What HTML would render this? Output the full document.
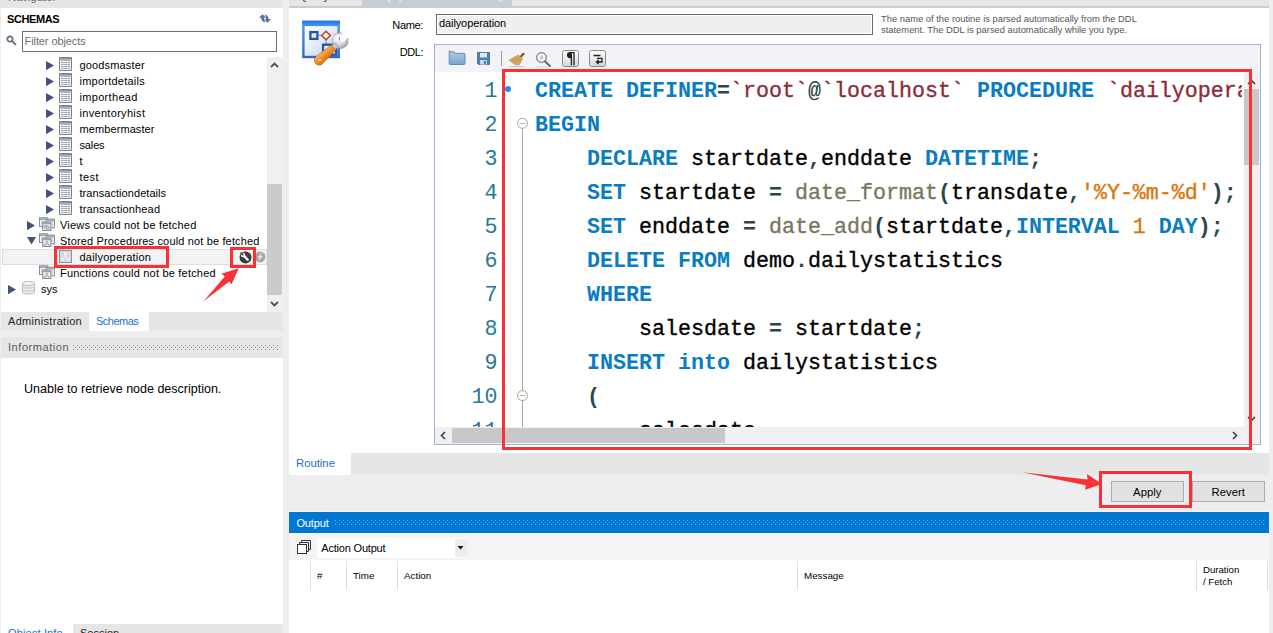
<!DOCTYPE html>
<html>
<head>
<meta charset="utf-8">
<title>MySQL Workbench</title>
<style>
html,body{margin:0;padding:0;}
body{width:1273px;height:633px;overflow:hidden;position:relative;background:#eeeef0;font-family:"Liberation Sans",sans-serif;font-size:11.3px;color:#000;}
.a{position:absolute;}
.t{position:absolute;white-space:nowrap;line-height:16px;height:16px;}
svg{position:absolute;overflow:visible;}
.row{position:absolute;left:0;height:16px;width:266px;}
.lbl{position:absolute;top:0;line-height:16px;white-space:nowrap;font-size:11px;color:#000;}
.ln{position:absolute;left:0;width:62.5px;text-align:right;font-family:"Liberation Mono",monospace;font-size:21.66px;color:#2a7894;line-height:34px;height:34px;}
.cl{position:absolute;left:100px;font-family:"Liberation Mono",monospace;font-size:21.66px;line-height:34px;height:34px;white-space:pre;color:#000;-webkit-text-stroke:0.35px currentColor;}
.k{color:#0a7cc2;font-weight:bold;-webkit-text-stroke:0;}
.s{color:#8b2d3a;}
.p{color:#2c474b;font-weight:bold;-webkit-text-stroke:0;}
.f{color:#7b7660;}
.o{color:#d9760a;}
</style>
</head>
<body>
<!-- ================= LEFT PANEL ================= -->
<div class="a" style="left:1px;top:0;width:282px;height:633px;background:#fff"></div>
<div class="a" style="left:0;top:0;width:283px;height:8px;background:#e6e6e6"></div>
<div class="a" style="left:0;top:0;width:283px;height:8px;overflow:hidden"><div class="t" style="left:8px;top:-11px;font-size:11.3px;color:#6a6a6a">Navigator</div></div>
<div class="t" style="left:7px;top:11px;font-weight:bold;font-size:11px;letter-spacing:-0.4px">SCHEMAS</div>
<svg class="a" style="left:259px;top:13.5px" width="12" height="9" viewBox="0 0 12 9"><path d="M3.5 0.2 L7 3.8 H5 C5 5.8 5.6 7.4 6.6 8.6 C4.2 8.4 2.3 6.6 2.2 3.8 H0 Z" fill="#56729a"/><path d="M8.5 8.8 L5 5.2 H7 C7 3.2 6.4 1.6 5.4 0.4 C7.8 0.6 9.7 2.4 9.8 5.2 H12 Z" fill="#56729a"/></svg>
<svg class="a" style="left:5.65px;top:35.1px" width="11" height="11" viewBox="0 0 11 11"><circle cx="4" cy="4" r="2.7" fill="none" stroke="#5f6d7e" stroke-width="1.7"/><path d="M6.2 6.2 L9.4 9.4" stroke="#5f6d7e" stroke-width="1.9" stroke-linecap="round"/></svg>
<div class="a" style="left:22px;top:31px;width:253px;height:19px;border:1px solid #6e6e6e;background:#fff"></div>
<div class="t" style="left:24.6px;top:33px;color:#6d6d6d;font-size:11px;letter-spacing:-0.1px">Filter objects</div>
<svg class="a" style="left:46px;top:60.9px" width="8" height="9"><path d="M0 0 L8 4.6 L0 9.2 Z" fill="#42537a"/></svg>
<svg class="a" style="left:59px;top:57px" width="13" height="14" viewBox="0 0 13 14"><rect x="0.5" y="0.5" width="12" height="13" fill="#eff1f4" stroke="#7d858f"/><rect x="1" y="1" width="11" height="1.6" fill="#8a919b"/><path d="M2.2 3.5 H4.6 M5.3 3.5 H8.2 M8.9 3.5 H10.9" stroke="#8e959f" stroke-width="0.9"/><path d="M2.2 5.5 H4.6 M5.3 5.5 H8.2 M8.9 5.5 H10.9" stroke="#8e959f" stroke-width="0.9"/><path d="M2.2 7.5 H4.6 M5.3 7.5 H8.2 M8.9 7.5 H10.9" stroke="#8e959f" stroke-width="0.9"/><path d="M2.2 9.5 H4.6 M5.3 9.5 H8.2 M8.9 9.5 H10.9" stroke="#8e959f" stroke-width="0.9"/><path d="M2.2 11.5 H4.6 M5.3 11.5 H8.2 M8.9 11.5 H10.9" stroke="#8e959f" stroke-width="0.9"/></svg>
<div class="lbl" style="left:79.5px;top:57px;letter-spacing:0.15px">goodsmaster</div>
<svg class="a" style="left:46px;top:76.9px" width="8" height="9"><path d="M0 0 L8 4.6 L0 9.2 Z" fill="#42537a"/></svg>
<svg class="a" style="left:59px;top:73px" width="13" height="14" viewBox="0 0 13 14"><rect x="0.5" y="0.5" width="12" height="13" fill="#eff1f4" stroke="#7d858f"/><rect x="1" y="1" width="11" height="1.6" fill="#8a919b"/><path d="M2.2 3.5 H4.6 M5.3 3.5 H8.2 M8.9 3.5 H10.9" stroke="#8e959f" stroke-width="0.9"/><path d="M2.2 5.5 H4.6 M5.3 5.5 H8.2 M8.9 5.5 H10.9" stroke="#8e959f" stroke-width="0.9"/><path d="M2.2 7.5 H4.6 M5.3 7.5 H8.2 M8.9 7.5 H10.9" stroke="#8e959f" stroke-width="0.9"/><path d="M2.2 9.5 H4.6 M5.3 9.5 H8.2 M8.9 9.5 H10.9" stroke="#8e959f" stroke-width="0.9"/><path d="M2.2 11.5 H4.6 M5.3 11.5 H8.2 M8.9 11.5 H10.9" stroke="#8e959f" stroke-width="0.9"/></svg>
<div class="lbl" style="left:79.5px;top:73px;letter-spacing:0.24px">importdetails</div>
<svg class="a" style="left:46px;top:92.9px" width="8" height="9"><path d="M0 0 L8 4.6 L0 9.2 Z" fill="#42537a"/></svg>
<svg class="a" style="left:59px;top:89px" width="13" height="14" viewBox="0 0 13 14"><rect x="0.5" y="0.5" width="12" height="13" fill="#eff1f4" stroke="#7d858f"/><rect x="1" y="1" width="11" height="1.6" fill="#8a919b"/><path d="M2.2 3.5 H4.6 M5.3 3.5 H8.2 M8.9 3.5 H10.9" stroke="#8e959f" stroke-width="0.9"/><path d="M2.2 5.5 H4.6 M5.3 5.5 H8.2 M8.9 5.5 H10.9" stroke="#8e959f" stroke-width="0.9"/><path d="M2.2 7.5 H4.6 M5.3 7.5 H8.2 M8.9 7.5 H10.9" stroke="#8e959f" stroke-width="0.9"/><path d="M2.2 9.5 H4.6 M5.3 9.5 H8.2 M8.9 9.5 H10.9" stroke="#8e959f" stroke-width="0.9"/><path d="M2.2 11.5 H4.6 M5.3 11.5 H8.2 M8.9 11.5 H10.9" stroke="#8e959f" stroke-width="0.9"/></svg>
<div class="lbl" style="left:79.5px;top:89px;letter-spacing:0.32px">importhead</div>
<svg class="a" style="left:46px;top:108.9px" width="8" height="9"><path d="M0 0 L8 4.6 L0 9.2 Z" fill="#42537a"/></svg>
<svg class="a" style="left:59px;top:105px" width="13" height="14" viewBox="0 0 13 14"><rect x="0.5" y="0.5" width="12" height="13" fill="#eff1f4" stroke="#7d858f"/><rect x="1" y="1" width="11" height="1.6" fill="#8a919b"/><path d="M2.2 3.5 H4.6 M5.3 3.5 H8.2 M8.9 3.5 H10.9" stroke="#8e959f" stroke-width="0.9"/><path d="M2.2 5.5 H4.6 M5.3 5.5 H8.2 M8.9 5.5 H10.9" stroke="#8e959f" stroke-width="0.9"/><path d="M2.2 7.5 H4.6 M5.3 7.5 H8.2 M8.9 7.5 H10.9" stroke="#8e959f" stroke-width="0.9"/><path d="M2.2 9.5 H4.6 M5.3 9.5 H8.2 M8.9 9.5 H10.9" stroke="#8e959f" stroke-width="0.9"/><path d="M2.2 11.5 H4.6 M5.3 11.5 H8.2 M8.9 11.5 H10.9" stroke="#8e959f" stroke-width="0.9"/></svg>
<div class="lbl" style="left:79.5px;top:105px;letter-spacing:0.31px">inventoryhist</div>
<svg class="a" style="left:46px;top:124.9px" width="8" height="9"><path d="M0 0 L8 4.6 L0 9.2 Z" fill="#42537a"/></svg>
<svg class="a" style="left:59px;top:121px" width="13" height="14" viewBox="0 0 13 14"><rect x="0.5" y="0.5" width="12" height="13" fill="#eff1f4" stroke="#7d858f"/><rect x="1" y="1" width="11" height="1.6" fill="#8a919b"/><path d="M2.2 3.5 H4.6 M5.3 3.5 H8.2 M8.9 3.5 H10.9" stroke="#8e959f" stroke-width="0.9"/><path d="M2.2 5.5 H4.6 M5.3 5.5 H8.2 M8.9 5.5 H10.9" stroke="#8e959f" stroke-width="0.9"/><path d="M2.2 7.5 H4.6 M5.3 7.5 H8.2 M8.9 7.5 H10.9" stroke="#8e959f" stroke-width="0.9"/><path d="M2.2 9.5 H4.6 M5.3 9.5 H8.2 M8.9 9.5 H10.9" stroke="#8e959f" stroke-width="0.9"/><path d="M2.2 11.5 H4.6 M5.3 11.5 H8.2 M8.9 11.5 H10.9" stroke="#8e959f" stroke-width="0.9"/></svg>
<div class="lbl" style="left:79.5px;top:121px;letter-spacing:0.09px">membermaster</div>
<svg class="a" style="left:46px;top:140.9px" width="8" height="9"><path d="M0 0 L8 4.6 L0 9.2 Z" fill="#42537a"/></svg>
<svg class="a" style="left:59px;top:137px" width="13" height="14" viewBox="0 0 13 14"><rect x="0.5" y="0.5" width="12" height="13" fill="#eff1f4" stroke="#7d858f"/><rect x="1" y="1" width="11" height="1.6" fill="#8a919b"/><path d="M2.2 3.5 H4.6 M5.3 3.5 H8.2 M8.9 3.5 H10.9" stroke="#8e959f" stroke-width="0.9"/><path d="M2.2 5.5 H4.6 M5.3 5.5 H8.2 M8.9 5.5 H10.9" stroke="#8e959f" stroke-width="0.9"/><path d="M2.2 7.5 H4.6 M5.3 7.5 H8.2 M8.9 7.5 H10.9" stroke="#8e959f" stroke-width="0.9"/><path d="M2.2 9.5 H4.6 M5.3 9.5 H8.2 M8.9 9.5 H10.9" stroke="#8e959f" stroke-width="0.9"/><path d="M2.2 11.5 H4.6 M5.3 11.5 H8.2 M8.9 11.5 H10.9" stroke="#8e959f" stroke-width="0.9"/></svg>
<div class="lbl" style="left:79.5px;top:137px;letter-spacing:-0.14px">sales</div>
<svg class="a" style="left:46px;top:156.9px" width="8" height="9"><path d="M0 0 L8 4.6 L0 9.2 Z" fill="#42537a"/></svg>
<svg class="a" style="left:59px;top:153px" width="13" height="14" viewBox="0 0 13 14"><rect x="0.5" y="0.5" width="12" height="13" fill="#eff1f4" stroke="#7d858f"/><rect x="1" y="1" width="11" height="1.6" fill="#8a919b"/><path d="M2.2 3.5 H4.6 M5.3 3.5 H8.2 M8.9 3.5 H10.9" stroke="#8e959f" stroke-width="0.9"/><path d="M2.2 5.5 H4.6 M5.3 5.5 H8.2 M8.9 5.5 H10.9" stroke="#8e959f" stroke-width="0.9"/><path d="M2.2 7.5 H4.6 M5.3 7.5 H8.2 M8.9 7.5 H10.9" stroke="#8e959f" stroke-width="0.9"/><path d="M2.2 9.5 H4.6 M5.3 9.5 H8.2 M8.9 9.5 H10.9" stroke="#8e959f" stroke-width="0.9"/><path d="M2.2 11.5 H4.6 M5.3 11.5 H8.2 M8.9 11.5 H10.9" stroke="#8e959f" stroke-width="0.9"/></svg>
<div class="lbl" style="left:79.5px;top:153px;letter-spacing:0.1px">t</div>
<svg class="a" style="left:46px;top:172.9px" width="8" height="9"><path d="M0 0 L8 4.6 L0 9.2 Z" fill="#42537a"/></svg>
<svg class="a" style="left:59px;top:169px" width="13" height="14" viewBox="0 0 13 14"><rect x="0.5" y="0.5" width="12" height="13" fill="#eff1f4" stroke="#7d858f"/><rect x="1" y="1" width="11" height="1.6" fill="#8a919b"/><path d="M2.2 3.5 H4.6 M5.3 3.5 H8.2 M8.9 3.5 H10.9" stroke="#8e959f" stroke-width="0.9"/><path d="M2.2 5.5 H4.6 M5.3 5.5 H8.2 M8.9 5.5 H10.9" stroke="#8e959f" stroke-width="0.9"/><path d="M2.2 7.5 H4.6 M5.3 7.5 H8.2 M8.9 7.5 H10.9" stroke="#8e959f" stroke-width="0.9"/><path d="M2.2 9.5 H4.6 M5.3 9.5 H8.2 M8.9 9.5 H10.9" stroke="#8e959f" stroke-width="0.9"/><path d="M2.2 11.5 H4.6 M5.3 11.5 H8.2 M8.9 11.5 H10.9" stroke="#8e959f" stroke-width="0.9"/></svg>
<div class="lbl" style="left:79.5px;top:169px;letter-spacing:0.44px">test</div>
<svg class="a" style="left:46px;top:188.9px" width="8" height="9"><path d="M0 0 L8 4.6 L0 9.2 Z" fill="#42537a"/></svg>
<svg class="a" style="left:59px;top:185px" width="13" height="14" viewBox="0 0 13 14"><rect x="0.5" y="0.5" width="12" height="13" fill="#eff1f4" stroke="#7d858f"/><rect x="1" y="1" width="11" height="1.6" fill="#8a919b"/><path d="M2.2 3.5 H4.6 M5.3 3.5 H8.2 M8.9 3.5 H10.9" stroke="#8e959f" stroke-width="0.9"/><path d="M2.2 5.5 H4.6 M5.3 5.5 H8.2 M8.9 5.5 H10.9" stroke="#8e959f" stroke-width="0.9"/><path d="M2.2 7.5 H4.6 M5.3 7.5 H8.2 M8.9 7.5 H10.9" stroke="#8e959f" stroke-width="0.9"/><path d="M2.2 9.5 H4.6 M5.3 9.5 H8.2 M8.9 9.5 H10.9" stroke="#8e959f" stroke-width="0.9"/><path d="M2.2 11.5 H4.6 M5.3 11.5 H8.2 M8.9 11.5 H10.9" stroke="#8e959f" stroke-width="0.9"/></svg>
<div class="lbl" style="left:79.5px;top:185px;letter-spacing:0.06px">transactiondetails</div>
<svg class="a" style="left:46px;top:204.9px" width="8" height="9"><path d="M0 0 L8 4.6 L0 9.2 Z" fill="#42537a"/></svg>
<svg class="a" style="left:59px;top:201px" width="13" height="14" viewBox="0 0 13 14"><rect x="0.5" y="0.5" width="12" height="13" fill="#eff1f4" stroke="#7d858f"/><rect x="1" y="1" width="11" height="1.6" fill="#8a919b"/><path d="M2.2 3.5 H4.6 M5.3 3.5 H8.2 M8.9 3.5 H10.9" stroke="#8e959f" stroke-width="0.9"/><path d="M2.2 5.5 H4.6 M5.3 5.5 H8.2 M8.9 5.5 H10.9" stroke="#8e959f" stroke-width="0.9"/><path d="M2.2 7.5 H4.6 M5.3 7.5 H8.2 M8.9 7.5 H10.9" stroke="#8e959f" stroke-width="0.9"/><path d="M2.2 9.5 H4.6 M5.3 9.5 H8.2 M8.9 9.5 H10.9" stroke="#8e959f" stroke-width="0.9"/><path d="M2.2 11.5 H4.6 M5.3 11.5 H8.2 M8.9 11.5 H10.9" stroke="#8e959f" stroke-width="0.9"/></svg>
<div class="lbl" style="left:79.5px;top:201px;letter-spacing:0.16px">transactionhead</div>
<svg class="a" style="left:27px;top:220.8px" width="8" height="9"><path d="M0 0 L8 4.6 L0 9.2 Z" fill="#42537a"/></svg>
<svg class="a" style="left:39px;top:217px" width="16" height="14" viewBox="0 0 16 14"><rect x="0.5" y="0.8" width="8.2" height="8.6" fill="#eef0f3" stroke="#838a95"/><rect x="1" y="1.3" width="7.2" height="1.6" fill="#9aa0aa"/><path d="M2.5 4.5 H4.5 M5.5 4.5 H7 M2.5 6.5 H4.5" stroke="#a9aeb7" stroke-width="0.9"/><rect x="7.2" y="2.1" width="8.2" height="8.8" fill="#eef0f3" stroke="#838a95"/><rect x="7.7" y="2.6" width="7.2" height="1.6" fill="#9aa0aa"/><path d="M12.8 5.8 H14 M12.8 7.8 H14" stroke="#a9aeb7" stroke-width="0.9"/><rect x="3.7" y="5.2" width="8.2" height="8.3" fill="#e9ebef" stroke="#838a95"/><rect x="4.2" y="5.7" width="7.2" height="1.5" fill="#9aa0aa"/><rect x="5.6" y="8.6" width="2.6" height="2.2" fill="none" stroke="#8f96a0" stroke-width="0.8"/><rect x="7.4" y="9.8" width="2.6" height="2.2" fill="#e9ebef" stroke="#8f96a0" stroke-width="0.8"/></svg>
<div class="lbl" style="left:60px;top:217px;letter-spacing:0.2px">Views could not be fetched</div>
<svg class="a" style="left:27px;top:237px" width="9" height="8"><path d="M0 0 L9 0 L4.5 7.5 Z" fill="#42537a"/></svg>
<svg class="a" style="left:39px;top:233px" width="16" height="14" viewBox="0 0 16 14"><rect x="0.5" y="0.8" width="8.2" height="8.6" fill="#eef0f3" stroke="#838a95"/><rect x="1" y="1.3" width="7.2" height="1.6" fill="#9aa0aa"/><path d="M2.5 4.5 H4.5 M5.5 4.5 H7 M2.5 6.5 H4.5" stroke="#a9aeb7" stroke-width="0.9"/><rect x="7.2" y="2.1" width="8.2" height="8.8" fill="#eef0f3" stroke="#838a95"/><rect x="7.7" y="2.6" width="7.2" height="1.6" fill="#9aa0aa"/><path d="M12.8 5.8 H14 M12.8 7.8 H14" stroke="#a9aeb7" stroke-width="0.9"/><rect x="3.7" y="5.2" width="8.2" height="8.3" fill="#e9ebef" stroke="#838a95"/><rect x="4.2" y="5.7" width="7.2" height="1.5" fill="#9aa0aa"/><path d="M7.8 8.3 V9.6 M6 11.8 L7.8 9.6 L9.6 11.8" stroke="#8f96a0" stroke-width="0.8" fill="none"/><rect x="7.1" y="7.9" width="1.4" height="1.2" fill="#8f96a0"/><rect x="5.3" y="11.2" width="1.4" height="1.2" fill="#8f96a0"/><rect x="8.9" y="11.2" width="1.4" height="1.2" fill="#8f96a0"/></svg>
<div class="lbl" style="left:60px;top:233px;letter-spacing:0.15px">Stored Procedures could not be fetched</div>
<div class="a" style="left:2px;top:249px;width:263px;height:14px;background:#f3f3f3;border:1px solid #dedede"></div>
<svg class="a" style="left:59px;top:249.5px" width="13" height="13" viewBox="0 0 13 13"><rect x="0.5" y="0.5" width="12" height="12" fill="#d6d9de" stroke="#8a919c"/><path d="M6.5 4 V6 M3.6 9 L6.5 6 L9.4 9" stroke="#f2f3f5" fill="none" stroke-width="1"/><rect x="5.5" y="2.6" width="2" height="2" fill="#d6d9de" stroke="#f2f3f5" stroke-width="0.8"/><rect x="2.6" y="8.4" width="2" height="2" fill="#d6d9de" stroke="#f2f3f5" stroke-width="0.8"/><rect x="8.4" y="8.4" width="2" height="2" fill="#d6d9de" stroke="#f2f3f5" stroke-width="0.8"/></svg>
<div class="lbl" style="left:79.5px;top:249px;letter-spacing:0.23px">dailyoperation</div>
<svg class="a" style="left:239px;top:250.7px" width="13" height="13" viewBox="0 0 13 13"><circle cx="6.5" cy="6.5" r="6" fill="#3c3c3c"/><path d="M4.6 4.6 L8.6 8.6" stroke="#fff" stroke-width="2.3" stroke-linecap="round" fill="none"/><circle cx="4.1" cy="4.1" r="2.2" fill="#fff"/><path d="M1.6 1.6 L4.3 4.3" stroke="#3c3c3c" stroke-width="1.5"/></svg>
<svg class="a" style="left:254.4px;top:251.4px" width="12" height="12" viewBox="0 0 12 12"><circle cx="6" cy="6" r="5.4" fill="#a6a6a6"/><path d="M8.4 1.2 L3.2 6.6 H5.8 L3.8 10.8 L9 5.2 H6.4 Z" fill="#ebebeb"/></svg>
<svg class="a" style="left:39px;top:265px" width="16" height="14" viewBox="0 0 16 14"><rect x="0.5" y="0.8" width="8.2" height="8.6" fill="#eef0f3" stroke="#838a95"/><rect x="1" y="1.3" width="7.2" height="1.6" fill="#9aa0aa"/><path d="M2.5 4.5 H4.5 M5.5 4.5 H7 M2.5 6.5 H4.5" stroke="#a9aeb7" stroke-width="0.9"/><rect x="7.2" y="2.1" width="8.2" height="8.8" fill="#eef0f3" stroke="#838a95"/><rect x="7.7" y="2.6" width="7.2" height="1.6" fill="#9aa0aa"/><path d="M12.8 5.8 H14 M12.8 7.8 H14" stroke="#a9aeb7" stroke-width="0.9"/><rect x="3.7" y="5.2" width="8.2" height="8.3" fill="#e9ebef" stroke="#838a95"/><rect x="4.2" y="5.7" width="7.2" height="1.5" fill="#9aa0aa"/><path d="M7.8 8.3 V9.6 M6 11.8 L7.8 9.6 L9.6 11.8" stroke="#8f96a0" stroke-width="0.8" fill="none"/><rect x="7.1" y="7.9" width="1.4" height="1.2" fill="#8f96a0"/><rect x="5.3" y="11.2" width="1.4" height="1.2" fill="#8f96a0"/><rect x="8.9" y="11.2" width="1.4" height="1.2" fill="#8f96a0"/></svg>
<div class="lbl" style="left:60px;top:265px;letter-spacing:0.2px">Functions could not be fetched</div>
<svg class="a" style="left:8px;top:285px" width="8" height="9"><path d="M0 0 L8 4.6 L0 9.2 Z" fill="#42537a"/></svg>
<svg class="a" style="left:21.5px;top:281.3px" width="13" height="14" viewBox="0 0 13 14"><path d="M0.5 2.5 V11.5 C0.5 13.5 12.5 13.5 12.5 11.5 V2.5" fill="#e9e9ec" stroke="#b9bcc2"/><ellipse cx="6.5" cy="2.5" rx="6" ry="2" fill="#f4f4f6" stroke="#b9bcc2"/><path d="M0.5 5.5 C0.5 7.5 12.5 7.5 12.5 5.5 M0.5 8.5 C0.5 10.5 12.5 10.5 12.5 8.5" fill="none" stroke="#c6c8cd"/></svg>
<div class="lbl" style="left:41px;top:281px;letter-spacing:0.05px">sys</div>
<div class="a" style="left:267px;top:57px;width:16px;height:255px;background:#f0f0f0"></div>
<div class="a" style="left:267px;top:184px;width:15px;height:111px;background:#cbcbcb"></div>
<svg class="a" style="left:270px;top:62px" width="9" height="6" viewBox="0 0 9 6"><path d="M1 5 L4.5 1.5 L8 5" fill="none" stroke="#505050" stroke-width="1.8"/></svg>
<svg class="a" style="left:270px;top:301px" width="9" height="6" viewBox="0 0 9 6"><path d="M1 1 L4.5 4.5 L8 1" fill="none" stroke="#505050" stroke-width="1.8"/></svg>
<div class="a" style="left:54px;top:246px;width:109px;height:16.4px;border:3px solid #fb3035"></div>
<div class="a" style="left:230px;top:247px;width:20px;height:15px;border:3px solid #fb3035"></div>
<svg class="a" style="left:0px;top:0px" width="283" height="320" viewBox="0 0 283 320"><path d="M203.3 301.6 L224.8 276.6 L221.5 273.7 L238.7 268.2 L231.6 284.3 L229.2 281.4 Z" fill="#fb3035"/></svg>
<div class="a" style="left:1px;top:312px;width:282px;height:19px;background:#e6e6e6"></div>
<div class="a" style="left:89px;top:312px;width:60px;height:19px;background:#fff"></div>
<div class="t" style="left:8px;top:313px;color:#222;font-size:11px;letter-spacing:0.31px">Administration</div>
<div class="t" style="left:96px;top:313px;color:#1e6fd0;font-size:11px;letter-spacing:-0.5px">Schemas</div>
<div class="a" style="left:1px;top:331px;width:282px;height:6px;background:#eeeef0"></div>
<div class="a" style="left:1px;top:337px;width:282px;height:21px;background:#e6e6e6"></div>
<div class="t" style="left:8px;top:339px;color:#5a5a5a;font-size:11px;letter-spacing:0.55px">Information</div>
<svg class="a" style="left:73px;top:345px" width="205" height="5"><defs><pattern id="dotg" width="4" height="4" patternUnits="userSpaceOnUse"><rect x="0" y="0" width="1" height="1" fill="#929292"/><rect x="2" y="2" width="1" height="1" fill="#929292"/></pattern></defs><rect width="205" height="5" fill="url(#dotg)"/></svg>
<div class="t" style="left:24px;top:381px;font-size:12.5px">Unable to retrieve node description.</div>
<div class="a" style="left:73px;top:624px;width:210px;height:9px;background:#e6e6e6"></div>
<div class="a" style="left:0;top:624px;width:283px;height:9px;overflow:hidden"><div class="t" style="left:8px;top:1px;color:#1e6fd0;font-size:11px;letter-spacing:0.15px">Object Info</div><div class="t" style="left:80px;top:1px;color:#222;font-size:11px">Session</div></div>
<!-- ================= RIGHT PANEL ================= -->
<div class="a" style="left:289px;top:0;width:980px;height:6px;background:#e6e6e6"></div>
<div class="a" style="left:362px;top:0;width:150px;height:6px;background:#c8ccd6"></div>
<div class="a" style="left:289px;top:6px;width:980px;height:2px;background:#c8ccd6"></div>
<div class="a" style="left:289px;top:8px;width:980px;height:445px;background:#fff"></div>
<div class="a" style="left:289px;top:0;width:980px;height:5px;overflow:hidden"><div class="t" style="left:10px;top:-12.2px;color:#333;font-size:11px">Query 1</div><div class="t" style="left:81px;top:-12.2px;color:#f4f4f8;font-size:11px">dailyoperation - Routine</div><div class="t" style="left:209px;top:-9px;color:#f4f4f8;font-size:10px">x</div></div>
<svg class="a" style="left:296px;top:12px" width="64" height="60" viewBox="296 12 64 60"><defs><linearGradient id="gwin" x1="0" y1="0" x2="1" y2="1"><stop offset="0" stop-color="#ffffff"/><stop offset="0.45" stop-color="#e6eefc"/><stop offset="1" stop-color="#b4cbf2"/></linearGradient><linearGradient id="gtitle" x1="0" y1="0" x2="0" y2="1"><stop offset="0" stop-color="#1f73dc"/><stop offset="1" stop-color="#4a97ee"/></linearGradient><linearGradient id="gbord" x1="0" y1="0" x2="0" y2="1"><stop offset="0" stop-color="#5a9be8"/><stop offset="1" stop-color="#2a66cc"/></linearGradient><linearGradient id="gor" x1="0" y1="0" x2="0" y2="1"><stop offset="0" stop-color="#fdb866"/><stop offset="0.55" stop-color="#f08a1e"/><stop offset="1" stop-color="#d9720c"/></linearGradient><radialGradient id="gsil" cx="0.35" cy="0.3" r="0.8"><stop offset="0" stop-color="#ffffff"/><stop offset="0.6" stop-color="#d4d4d4"/><stop offset="1" stop-color="#8e8e8e"/></radialGradient><mask id="mwr"><rect x="296" y="12" width="64" height="60" fill="#000"/><circle cx="340.3" cy="40.8" r="8.2" fill="#fff"/><rect x="-3.3" y="-14" width="6.6" height="15" rx="2.5" transform="translate(341 40) rotate(43)" fill="#000"/></mask></defs><rect x="302.2" y="20.7" width="37.7" height="37.5" fill="url(#gbord)"/><rect x="304.6" y="26" width="32.9" height="29.8" fill="url(#gwin)"/><rect x="302.2" y="20.7" width="37.7" height="5.4" fill="url(#gtitle)"/><rect x="310.4" y="32.1" width="7" height="6.8" fill="#eef1f8" stroke="#2450b8" stroke-width="2.3"/><path d="M318.6 35.5 H321.5 M326 40 V44" stroke="#808080" stroke-width="0.9"/><path d="M326 31.2 L330.3 35.5 L326 39.8 L321.7 35.5 Z" fill="#fff" stroke="#cc3a1a" stroke-width="1.5"/><rect x="323.1" y="44.7" width="13" height="10" fill="#f2f6fd" stroke="#2450b8" stroke-width="2.3"/><g mask="url(#mwr)"><circle cx="340.3" cy="40.8" r="8.2" fill="url(#gsil)" stroke="#8a8a8a" stroke-width="0.9"/></g><g transform="translate(319.2 60.3) rotate(-41.8)"><rect x="18.5" y="-2.6" width="5" height="5.2" fill="#c9c9c9" stroke="#8a8a8a" stroke-width="0.6"/><path d="M0 -4.8 L19 -3.3 L19 3.3 L0 4.8 A4.8 4.8 0 0 1 0 -4.8 Z" fill="url(#gor)" stroke="#c8680a" stroke-width="0.7"/><circle cx="0.8" cy="0.2" r="1.9" fill="#fbd08e" stroke="#d87c18" stroke-width="0.7"/></g></svg>
<div class="t" style="left:373px;width:50px;text-align:right;top:17px;font-size:11px;letter-spacing:-0.35px">Name:</div>
<div class="t" style="left:373px;width:50px;text-align:right;top:44px;font-size:11px;letter-spacing:-0.45px">DDL:</div>
<div class="a" style="left:436px;top:14px;width:435px;height:19px;border:1px solid #6c6c6c;background:#efefef;box-shadow:inset 0 0 0 1px #fff"></div>
<div class="t" style="left:439px;top:15.3px;font-size:11px;letter-spacing:-0.1px">dailyoperation</div>
<div class="t" style="left:881px;top:13px;font-size:9.4px;color:#555;line-height:11px;height:auto">The name of the routine is parsed automatically from the DDL<br>statement. The DDL is parsed automatically while you type.</div>
<div class="a" style="left:434px;top:44px;width:825px;height:399px;border:1px solid #9db4d4;background:#f3f3f7"></div>
<svg class="a" style="left:435px;top:45px" width="200" height="27" viewBox="435 45 200 27"><defs><linearGradient id="gf" x1="0" y1="0" x2="0" y2="1"><stop offset="0" stop-color="#b4cee5"/><stop offset="1" stop-color="#78a3ca"/></linearGradient><linearGradient id="gb" x1="0" y1="0" x2="0" y2="1"><stop offset="0" stop-color="#ffffff"/><stop offset="1" stop-color="#d6d6d6"/></linearGradient></defs><path d="M450 51.8 h4.2 l1 1.5 h8.8 a1 1 0 0 1 1 1 v9.2 a1 1 0 0 1 -1 1 h-13.8 a1 1 0 0 1 -1 -1 v-11.7 a0.8 0.8 0 0 1 0.8 -0.9 Z" fill="url(#gf)" stroke="#5585b0" stroke-width="0.9"/><path d="M477.5 52.5 h12 v12 h-11 l-1 -1 Z" fill="#4b80ae" stroke="#3a6a95" stroke-width="0.8"/><rect x="480" y="53" width="7" height="4.5" fill="#dfe9f3"/><rect x="480" y="60" width="7" height="4.5" fill="#c9d9e8"/><rect x="484" y="61" width="2" height="3" fill="#4b80ae"/><path d="M501.5 51 V66" stroke="#9a9a9a" stroke-width="1"/><path d="M523 52.5 L525 54 L521 58 L519.5 56.5 Z" fill="#8b5a2b"/><path d="M509 60 L518.5 55 L522.5 59 L519 65 L515 64.5 Z" fill="#d9b064" stroke="#a8803a" stroke-width="0.6"/><path d="M511.5 61 L519 57 M513 62.5 L520.5 58.5 M515.5 63.5 L521.5 60" stroke="#a8803a" stroke-width="0.6"/><path d="M509 66.5 H524" stroke="#c9c9c9" stroke-width="1"/><circle cx="541.5" cy="57.5" r="4.8" fill="#fff" stroke="#7a7a7a" stroke-width="1.2"/><path d="M545 61.5 L550 66" stroke="#6a6a6a" stroke-width="2" stroke-linecap="round"/><path d="M539.8 59.5 L541.5 55.5 L543.2 59.5 M540.4 58.3 H542.6" stroke="#9a9a9a" stroke-width="0.7" fill="none"/><path d="M536 67 H549" stroke="#d5d5d5" stroke-width="1"/><rect x="562.5" y="50.5" width="16" height="16" rx="2" fill="url(#gb)" stroke="#8a8a8a"/><path d="M574 52.5 V65.3 M571.4 52.5 V65.3" stroke="#222" stroke-width="1.3"/><path d="M572 52 h-2 a3.1 3.1 0 0 0 0 6.2 h2 Z" fill="#222"/><path d="M570 52.5 H574.6" stroke="#222" stroke-width="1.1"/><rect x="589.5" y="50.5" width="16" height="16" rx="2" fill="url(#gb)" stroke="#8a8a8a"/><path d="M593.5 55.5 H600.5 M597 58.3 H602 V62 H598" stroke="#222" stroke-width="1.3" fill="none"/><path d="M598.8 59.3 L595.3 62 L598.8 64.7 Z" fill="#222"/></svg>
<div class="a" style="left:435px;top:72px;width:809px;height:355px;background:#fff;overflow:hidden"><div class="ln" style="top:3px">1</div><div class="cl" style="top:3px"><span class="k">CREATE</span> <span class="k">DEFINER</span><span class="p">=</span><span class="s">`root`</span><span class="p">@</span><span class="s">`localhost`</span> <span class="k">PROCEDURE</span> <span class="s">`dailyoperation`</span><span class="p">()</span></div><div class="ln" style="top:37px">2</div><div class="cl" style="top:37px"><span class="k">BEGIN</span></div><div class="ln" style="top:71px">3</div><div class="cl" style="top:71px">    <span class="k">DECLARE</span> startdate<span class="p">,</span>enddate <span class="k">DATETIME</span><span class="p">;</span></div><div class="ln" style="top:105px">4</div><div class="cl" style="top:105px">    <span class="k">SET</span> startdate <span class="p">=</span> <span class="f">date_format</span><span class="p">(</span>transdate<span class="p">,</span><span class="o">'%Y-%m-%d'</span><span class="p">);</span></div><div class="ln" style="top:139px">5</div><div class="cl" style="top:139px">    <span class="k">SET</span> enddate <span class="p">=</span> <span class="f">date_add</span><span class="p">(</span>startdate<span class="p">,</span><span class="k">INTERVAL</span> <span class="o">1</span> <span class="k">DAY</span><span class="p">);</span></div><div class="ln" style="top:173px">6</div><div class="cl" style="top:173px">    <span class="k">DELETE</span> <span class="k">FROM</span> demo<span class="p">.</span>dailystatistics</div><div class="ln" style="top:207px">7</div><div class="cl" style="top:207px">    <span class="k">WHERE</span></div><div class="ln" style="top:241px">8</div><div class="cl" style="top:241px">        salesdate <span class="p">=</span> startdate<span class="p">;</span></div><div class="ln" style="top:275px">9</div><div class="cl" style="top:275px">    <span class="k">INSERT</span> <span class="k">into</span> dailystatistics</div><div class="ln" style="top:309px">10</div><div class="cl" style="top:309px">    <span class="p">(</span></div><div class="ln" style="top:343px">11</div><div class="cl" style="top:343px">        salesdate<span class="p">,</span></div><div class="a" style="left:70px;top:14px;width:6px;height:6px;border-radius:3px;background:#1a8cff"></div><svg class="a" style="left:80px;top:0" width="16" height="355" viewBox="0 0 16 355"><path d="M7.5 56 V355" stroke="#a9a996" stroke-width="1"/><circle cx="7.5" cy="51.3" r="5" fill="#fff" stroke="#a9a996" stroke-width="1"/><path d="M4.4 51.3 H10.6" stroke="#a9a996" stroke-width="0.9"/><circle cx="7.5" cy="323.6" r="5" fill="#fff" stroke="#a9a996" stroke-width="1"/><path d="M4.4 323.6 H10.6" stroke="#a9a996" stroke-width="0.9"/></svg><div class="a" style="left:807px;top:0;width:2px;height:355px;background:#fff"></div></div>
<div class="a" style="left:1244px;top:72px;width:16px;height:355px;background:#f0f0f0"></div>
<div class="a" style="left:1244px;top:89px;width:15px;height:76px;background:#c8c8c8"></div>
<div class="a" style="left:435px;top:427px;width:825px;height:17px;background:#f0f0f0"></div>
<div class="a" style="left:452px;top:428px;width:273px;height:15px;background:#c8c8c8"></div>
<svg class="a" style="left:440px;top:431px" width="6" height="9" viewBox="0 0 6 9"><path d="M5 1 L1.5 4.5 L5 8" fill="none" stroke="#404040" stroke-width="1.6"/></svg>
<svg class="a" style="left:1232px;top:431px" width="6" height="9" viewBox="0 0 6 9"><path d="M1 1 L4.5 4.5 L1 8" fill="none" stroke="#404040" stroke-width="1.6"/></svg>
<svg class="a" style="left:1247.3px;top:79px" width="9" height="6" viewBox="0 0 9 6"><path d="M1 5 L4.5 1.5 L8 5" fill="none" stroke="#404040" stroke-width="1.6"/></svg>
<svg class="a" style="left:1247.3px;top:415.5px" width="9" height="6" viewBox="0 0 9 6"><path d="M1 1 L4.5 4.5 L8 1" fill="none" stroke="#404040" stroke-width="1.6"/></svg>
<div class="a" style="left:502px;top:69px;width:744px;height:375px;border:3px solid #fb3035"></div>
<div class="a" style="left:289px;top:453px;width:980px;height:22px;background:#e6e6e6"></div>
<div class="a" style="left:289px;top:453px;width:62px;height:22px;background:#fff"></div>
<div class="t" style="left:296px;top:455px;color:#1e6fd0">Routine</div>
<div class="a" style="left:1111px;top:481px;width:70.5px;height:18.5px;border:1px solid #adadad;background:#e1e1e1"></div>
<div class="t" style="left:1111px;top:484px;width:72.5px;text-align:center;font-size:11.3px">Apply</div>
<div class="a" style="left:1192px;top:481px;width:70.5px;height:18.5px;border:1px solid #adadad;background:#e1e1e1"></div>
<div class="t" style="left:1192px;top:484px;width:72.5px;text-align:center;font-size:11.3px">Revert</div>
<div class="a" style="left:1099px;top:471px;width:87px;height:30.5px;border:3px solid #fb3035"></div>
<svg class="a" style="left:0;top:0" width="1273" height="633" viewBox="0 0 1273 633"><path d="M1022 472.3 L1087.5 479.6 L1087 474 L1102 484 L1085 489.7 L1086 485.3 Z" fill="#fb3035"/></svg>
<div class="a" style="left:289px;top:511px;width:980px;height:1px;background:#fbf6f4"></div>
<div class="a" style="left:289px;top:512px;width:980px;height:21px;background:#0078d2"></div>
<div class="t" style="left:296.4px;top:514.5px;color:#fff;font-size:11px;letter-spacing:-0.1px">Output</div>
<svg class="a" style="left:335px;top:520px" width="930" height="5"><defs><pattern id="dotw" width="4" height="4" patternUnits="userSpaceOnUse"><rect x="0" y="0" width="1" height="1" fill="#fff" fill-opacity="0.38"/><rect x="2" y="2" width="1" height="1" fill="#fff" fill-opacity="0.38"/></pattern></defs><rect width="930" height="5" fill="url(#dotw)"/></svg>
<div class="a" style="left:289px;top:533px;width:980px;height:27px;background:#f4f4f6"></div>
<svg class="a" style="left:297px;top:540px" width="14" height="14" viewBox="0 0 14 14"><path d="M4.5 2.5 V0.5 H13.5 V9.5 H11.5" fill="none" stroke="#333"/><path d="M2.5 4.5 V2.5 H11.5 V11.5 H9.5" fill="none" stroke="#333"/><rect x="0.5" y="4.5" width="9" height="9" fill="#fff" stroke="#333"/></svg>
<div class="a" style="left:317px;top:537.5px;width:150px;height:20px;background:#fff"></div>
<div class="a" style="left:455px;top:538.5px;width:11.5px;height:18.5px;background:#ededed"></div>
<div class="t" style="left:321.3px;top:540px;font-size:11px;letter-spacing:-0.2px">Action Output</div>
<svg class="a" style="left:457px;top:546px" width="7" height="4" viewBox="0 0 7 4"><path d="M0.5 0 L6.5 0 L3.5 3.5 Z" fill="#111"/></svg>
<div class="a" style="left:289px;top:560px;width:980px;height:73px;background:#fff"></div>
<div class="a" style="left:310px;top:561px;width:1px;height:29px;background:#dedede"></div>
<div class="a" style="left:346px;top:561px;width:1px;height:29px;background:#dedede"></div>
<div class="a" style="left:397px;top:561px;width:1px;height:29px;background:#dedede"></div>
<div class="a" style="left:797px;top:561px;width:1px;height:29px;background:#dedede"></div>
<div class="a" style="left:1196px;top:561px;width:1px;height:29px;background:#dedede"></div>
<div class="a" style="left:1267px;top:561px;width:1px;height:29px;background:#dedede"></div>
<div class="t" style="left:317px;top:568px;font-size:9.8px">#</div>
<div class="t" style="left:353px;top:568px;font-size:9.8px">Time</div>
<div class="t" style="left:404px;top:568px;font-size:9.8px">Action</div>
<div class="t" style="left:804px;top:568px;font-size:9.8px">Message</div>
<div class="t" style="left:1203px;top:564px;font-size:9.6px;line-height:12px;height:auto">Duration<br>/ Fetch</div>
</body>
</html>
